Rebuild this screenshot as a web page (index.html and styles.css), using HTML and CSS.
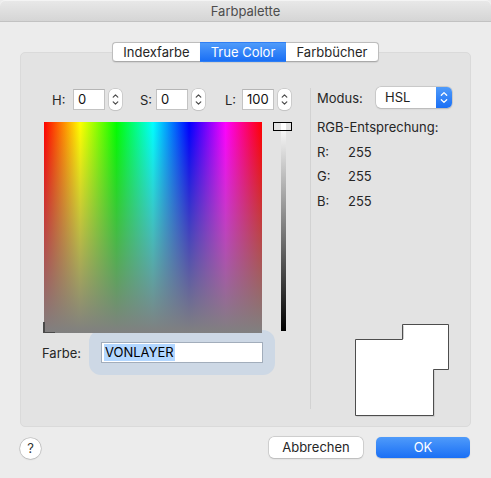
FILE: index.html
```html
<!DOCTYPE html>
<html lang="de">
<head>
<meta charset="utf-8">
<title>Farbpalette</title>
<link rel="stylesheet" href="styles.css">
</head>
<body>
<div class="window">
  <div class="titlebar">Farbpalette</div>
  <div class="content">
    <div class="tabs">
      <div class="tab tab-index">Indexfarbe</div>
      <div class="tab tab-true active">True Color</div>
      <div class="tab tab-books">Farbbücher</div>
    </div>
    <div class="group">
      <div class="left">
        <div class="hsl-row">
          <div class="field field-h">
            <span class="lbl">H:</span>
            <div class="num">0</div>
            <div class="stepper"><svg viewBox="0 0 13 21" width="13" height="21"><path d="M4.2 8.2 L6.5 5.9 L8.8 8.2 M4.2 12.8 L6.5 15.1 L8.8 12.8" fill="none" stroke="#4a4a4a" stroke-width="1.2" stroke-linecap="round" stroke-linejoin="round"/></svg></div>
          </div>
          <div class="field field-s">
            <span class="lbl">S:</span>
            <div class="num">0</div>
            <div class="stepper"><svg viewBox="0 0 13 21" width="13" height="21"><path d="M4.2 8.2 L6.5 5.9 L8.8 8.2 M4.2 12.8 L6.5 15.1 L8.8 12.8" fill="none" stroke="#4a4a4a" stroke-width="1.2" stroke-linecap="round" stroke-linejoin="round"/></svg></div>
          </div>
          <div class="field field-l">
            <span class="lbl">L:</span>
            <div class="num">100</div>
            <div class="stepper"><svg viewBox="0 0 13 21" width="13" height="21"><path d="M4.2 8.2 L6.5 5.9 L8.8 8.2 M4.2 12.8 L6.5 15.1 L8.8 12.8" fill="none" stroke="#4a4a4a" stroke-width="1.2" stroke-linecap="round" stroke-linejoin="round"/></svg></div>
          </div>
        </div>
        <div class="picker-row">
          <div class="spectrum">
            <div class="spectrum-fade"></div>
            <div class="cursor"></div>
          </div>
          <div class="slider">
            <div class="slider-bar"></div>
            <div class="slider-handle"></div>
          </div>
        </div>
        <div class="farbe-row">
          <span class="farbe-lbl">Farbe:</span>
          <div class="focus-ring">
            <div class="text-input"><span class="sel">VONLAYER</span></div>
          </div>
        </div>
      </div>
      <div class="divider"></div>
      <div class="right">
        <div class="modus-row">
          <span class="modus-lbl">Modus:</span>
          <div class="popup">
            <span class="popup-text">HSL</span>
            <div class="popup-arrows"><svg viewBox="0 0 16 21" width="16" height="21"><path d="M5.3 8.3 L8 5.6 L10.7 8.3 M5.3 12.7 L8 15.4 L10.7 12.7" fill="none" stroke="#ffffff" stroke-width="1.3" stroke-linecap="round" stroke-linejoin="round"/></svg></div>
          </div>
        </div>
        <div class="info-line rgb-title">RGB-Entsprechung:</div>
        <div class="info-line"><span class="ch">R:</span><span>255</span></div>
        <div class="info-line"><span class="ch">G:</span><span>255</span></div>
        <div class="info-line"><span class="ch">B:</span><span>255</span></div>
        <svg class="swatch" viewBox="0 0 96 94" width="96" height="94">
          <path d="M1.5 16.5 H48.5 V1.5 H94.5 V46.5 H79.5 V92.5 H1.5 Z" fill="#ffffff" stroke="#4d4d4d" stroke-width="1"/>
          <path d="M80.5 47.5 V93.5 M2.5 93.5 H80.5 M49.5 2.5 V16" fill="none" stroke="#cfcfcf" stroke-width="1"/>
        </svg>
      </div>
    </div>
    <div class="footer">
      <div class="help">?</div>
      <div class="btn btn-cancel">Abbrechen</div>
      <div class="btn btn-ok">OK</div>
    </div>
  </div>
</div>
</body>
</html>
```
FILE: styles.css
```css
* { box-sizing: border-box; }
html, body { margin: 0; padding: 0; }
body {
  width: 491px;
  height: 478px;
  background: #ececec;
  font-family: Inter, "Noto Sans", "Liberation Sans", sans-serif;
  font-size: 13px;
  color: #262626;
  overflow: hidden;
}
.window { width: 491px; height: 478px; background: #ececec; }
.titlebar {
  height: 22px;
  line-height: 22px;
  text-align: center;
  color: #4d4d4d;
  background: linear-gradient(#e9e9e9, #d5d5d5);
  border-bottom: 1px solid #c2c2c2;
  border-radius: 5px 5px 0 0;
  box-shadow: inset 0 1px 0 #f4f4f4;
}
.content { padding: 0 20px; }
.tabs {
  display: flex;
  justify-content: center;
  margin-top: 20px;
  position: relative;
  z-index: 1;
}
.tab {
  height: 20px;
  line-height: 18px;
  text-align: center;
  background: #ffffff;
  border-top: 1px solid #bdbdbd;
  border-bottom: 1px solid #a9a9a9;
  color: #262626;
  box-shadow: 0 0.5px 1px rgba(0,0,0,0.08);
}
.tab-index { width: 88px; border-left: 1px solid #bdbdbd; border-radius: 4px 0 0 4px; }
.tab-true { width: 86px; }
.tab-books { width: 93px; border-right: 1px solid #bdbdbd; border-radius: 0 4px 4px 0; }
.tab.active {
  background: linear-gradient(#4f9bfa, #1a6ff5);
  border-color: #2f7ef3;
  color: #ffffff;
}
.group {
  display: flex;
  margin-top: -10px;
  width: 451px;
  height: 375px;
  background: #e3e3e3;
  border: 1px solid #dadada;
  border-radius: 5px;
}
.left { width: 289px; padding-top: 36px; }
.hsl-row { display: flex; align-items: center; padding-left: 31px; height: 21px; }
.field { display: flex; align-items: center; }
.field-s { margin-left: 18px; }
.field-l { margin-left: 20px; }
.lbl { width: 21px; color: #262626; }
.field-s .lbl { width: 16px; }
.field-l .lbl { width: 17px; }
.num {
  width: 32px;
  height: 21px;
  line-height: 19px;
  padding-left: 4px;
  background: #ffffff;
  border: 1px solid #c3c3c3;
  border-top-color: #b5b5b5;
  color: #111;
}
.stepper {
  width: 13px;
  height: 21px;
  margin-left: 4px;
  background: #ffffff;
  border-radius: 5px;
  box-shadow: 0 0 0 0.5px #b8b8b8, 0 0.5px 1px rgba(0,0,0,0.15);
}
.stepper svg { display: block; }
.picker-row { display: flex; margin-top: 12px; padding-left: 23px; }
.spectrum {
  position: relative;
  width: 218px;
  height: 211px;
  background: linear-gradient(to right, #ff0000 0%, #ffff00 16.6%, #00ff00 33.3%, #00ffff 50%, #0000ff 66.6%, #ff00ff 83.3%, #ff0000 100%);
}
.spectrum-fade {
  width: 100%;
  height: 100%;
  background: linear-gradient(to bottom, rgba(128,128,128,0) 0%, rgba(128,128,128,0.2) 20%, rgba(128,128,128,1) 100%);
}
.cursor {
  position: absolute;
  left: -1px;
  bottom: 0;
  width: 12px;
  height: 11px;
  border-left: 2px solid #4a4a4a;
  border-bottom: 1.5px solid #4a4a4a;
}
.slider { position: relative; width: 19px; height: 209px; margin-left: 11px; }
.slider-bar {
  margin-left: 8px;
  width: 5px;
  height: 209px;
  background: linear-gradient(#ffffff, #000000);
}
.slider-handle {
  position: absolute;
  left: 0;
  top: 0;
  width: 19px;
  height: 9px;
  border: 1px solid #000;
  background: linear-gradient(to right, #e2e2e2 0, #e2e2e2 7px, #ffffff 7px, #ffffff 12px, #e2e2e2 12px);
}
.farbe-row { display: flex; align-items: center; margin-top: -3px; padding-left: 21px; }
.farbe-lbl { width: 47px; }
.focus-ring {
  padding: 12px;
  background: #cdd8e5;
  border-radius: 12px;
}
.text-input {
  width: 162px;
  height: 21px;
  line-height: 19px;
  padding-left: 2px;
  background: #ffffff;
  border: 1px solid #a2adbb;
  color: #000;
}
.sel { background: #b3d7ff; display: inline-block; line-height: 17px; padding: 0 1px; }
.divider { width: 1px; background: #d2d2d2; margin-top: 35px; margin-bottom: 17px; }
.right { width: 159px; padding: 34px 0 9px 6px; display: flex; flex-direction: column; }
.modus-row { display: flex; align-items: center; height: 21px; }
.modus-lbl { width: 59px; }
.popup {
  display: flex;
  width: 76px;
  height: 21px;
  background: #ffffff;
  border-radius: 5px;
  box-shadow: 0 0 0 0.5px #b8b8b8, 0 0.5px 1.5px rgba(0,0,0,0.18);
  overflow: hidden;
}
.popup-text { flex: 1; line-height: 21px; padding-left: 9px; color: #1e1e1e; }
.popup-arrows { width: 16px; background: linear-gradient(#4f9bfa, #1a6ff5); }
.popup-arrows svg { display: block; }
.info-line { height: 24.5px; line-height: 24.5px; display: flex; }
.rgb-title { margin-top: 7px; }
.ch { width: 31px; }
.swatch { display: block; margin-top: auto; margin-left: 37px; }
.footer { display: flex; align-items: center; margin-top: 10px; height: 21px; padding-right: 1px; }
.help {
  width: 21px;
  height: 21px;
  border-radius: 50%;
  background: #ffffff;
  text-align: center;
  line-height: 21px;
  color: #333;
  font-size: 13px;
  box-shadow: 0 0 0 0.5px #b5b5b5, 0 0.5px 1.5px rgba(0,0,0,0.2);
  margin-top: 2px;
}
.btn {
  width: 94px;
  height: 21px;
  line-height: 21px;
  text-align: center;
  border-radius: 5px;
}
.btn-cancel {
  margin-left: auto;
  background: #ffffff;
  color: #262626;
  box-shadow: 0 0 0 0.5px #b8b8b8, 0 0.5px 1.5px rgba(0,0,0,0.18);
}
.btn-ok {
  margin-left: 13px;
  background: linear-gradient(#4f9bfa, #1a6ff5);
  color: #ffffff;
  box-shadow: 0 0.5px 1px rgba(0,0,0,0.15);
}
```
